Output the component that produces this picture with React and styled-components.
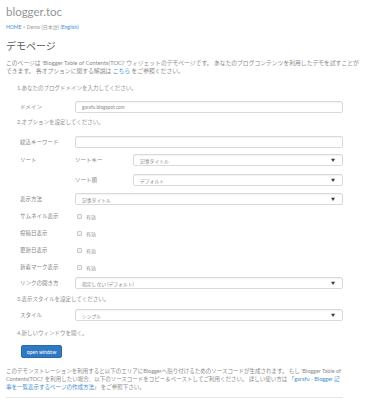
import React from "react";
import styled, { createGlobalStyle } from "styled-components";

const GlobalStyle = createGlobalStyle`
  html, body {
    margin: 0;
    padding: 0;
    background: #fff;
  }
  body {
    font-family: Lato, "Noto Sans CJK JP", sans-serif;
    color: #666;
  }
`;

const Page = styled.div`
  width: 387px;
  height: 400px;
  overflow: hidden;
  box-sizing: border-box;
  padding: 4px 0 0 6px;
`;

const SiteTitle = styled.div`
  font-size: 11.5px;
  line-height: 16px;
  font-weight: 400;
  color: #959595;
`;

const Crumbs = styled.div`
  margin-top: 3px;
  font-size: 5px;
  line-height: 8px;
  color: #999;
`;

const Link = styled.a`
  color: #3d8fd1;
  text-decoration: none;
`;

const Heading = styled.h1`
  margin: 8px 0 0;
  font-size: 10px;
  line-height: 14px;
  font-weight: 400;
  color: #5a5a5a;
`;

const Para = styled.p`
  margin: ${(p) => p.$top || 0}px 0 0;
  width: 376px;
  font-size: ${(p) => p.$size || 5.7}px;
  line-height: ${(p) => p.$lh || 7.5}px;
  color: #8a8a8a;
`;

const Step = styled.div`
  margin: ${(p) => p.$top}px 0 0 11px;
  font-size: 5.5px;
  line-height: 8px;
  color: #909090;
`;

const Row = styled.div`
  display: flex;
  align-items: ${(p) => (p.$top_align ? "flex-start" : "center")};
  margin: ${(p) => p.$top}px 0 0 14px;
  width: 323px;
  min-height: 12px;
`;

const Label = styled.div`
  flex: none;
  width: ${(p) => p.$width || 55}px;
  font-size: 5.5px;
  line-height: 12px;
  color: #858585;
`;

const Field = styled.div`
  flex: 1;
  box-sizing: border-box;
  height: 12px;
  display: flex;
  align-items: center;
  justify-content: space-between;
  padding: 0 7px 0 6px;
  border: 1px solid #dadada;
  border-radius: 2px;
  background: #fff;
  box-shadow: inset 0 1px 1px rgba(0, 0, 0, 0.05);
  font-size: 4.8px;
  color: #888;
`;

const Arrow = styled.span`
  font-size: 4px;
  color: #333;
`;

const Group = styled.div`
  flex: 1;
  display: flex;
  flex-direction: column;
  gap: 8px;
`;

const SubRow = styled.div`
  display: flex;
  align-items: center;
`;

const Check = styled.label`
  display: flex;
  align-items: center;
  gap: 4px;
  padding-left: 2px;
  font-size: 5px;
  color: #909090;
`;

const Box = styled.span`
  width: 3px;
  height: 3px;
  border: 1px solid #c8c8c8;
  border-radius: 1px;
  background: #f4f4f4;
`;

const Button = styled.button`
  margin: 8px 0 0 15px;
  width: 41px;
  height: 13px;
  padding: 0;
  border: 1px solid #2a6aa6;
  border-radius: 2px;
  background: #3079c2;
  color: #fff;
  font-family: Lato, sans-serif;
  font-size: 5px;
  display: block;
`;

const Rule = styled.hr`
  margin: 6px 0 0;
  width: 337px;
  border: none;
  border-top: 1px solid #e6e6e6;
`;

const Select = ({ value }) => (
  <Field>
    <span>{value}</span>
    <Arrow>▼</Arrow>
  </Field>
);

const CheckRow = ({ label }) => (
  <Row $top={5}>
    <Label>{label}</Label>
    <Check>
      <Box />
      有効
    </Check>
  </Row>
);

export default function App() {
  return (
    <Page>
      <GlobalStyle />
      <SiteTitle>blogger.toc</SiteTitle>
      <Crumbs>
        <Link href="#">HOME</Link> &gt; Demo (日本語) <Link href="#">(English)</Link>
      </Crumbs>
      <Heading>デモページ</Heading>
      <Para $top={6} $size={5.8}>
        このページは 'Blogger Table of Contents(TOC)' ウィジェットのデモページです。 あなたのブログコンテンツを利用したデモを試すことが
        <br />
        できます。 各オプションに関する解説は <Link href="#">こちら</Link> をご参照ください。
      </Para>

      <Step $top={10}>1.あなたのブログドメインを入力してください。</Step>
      <Row $top={9}>
        <Label>ドメイン</Label>
        <Field>garafu.blogspot.com</Field>
      </Row>

      <Step $top={5}>2.オプションを設定してください。</Step>
      <Row $top={10}>
        <Label>絞込キーワード</Label>
        <Field />
      </Row>
      <Row $top={6} $top_align>
        <Label>ソート</Label>
        <Group>
          <SubRow>
            <Label $width={58}>ソートキー</Label>
            <Select value="記事タイトル" />
          </SubRow>
          <SubRow>
            <Label $width={58}>ソート順</Label>
            <Select value="デフォルト" />
          </SubRow>
        </Group>
      </Row>
      <Row $top={7}>
        <Label>表示方法</Label>
        <Select value="記事タイトル" />
      </Row>
      <CheckRow label="サムネイル表示" />
      <CheckRow label="投稿日表示" />
      <CheckRow label="更新日表示" />
      <CheckRow label="新着マーク表示" />
      <Row $top={4}>
        <Label>リンクの開き方</Label>
        <Select value="指定しない (デフォルト)" />
      </Row>

      <Step $top={6}>3.表示スタイルを設定してください。</Step>
      <Row $top={6}>
        <Label>スタイル</Label>
        <Select value="シンプル" />
      </Row>

      <Step $top={8}>4.新しいウィンドウを開く。</Step>
      <Button>open window</Button>

      <Para $top={9} $size={5.5} $lh={8}>
        このデモンストレーションを利用すると以下のエリアにBloggerへ貼り付けるためのソースコードが生成されます。 もし 'Blogger Table of
        <br />
        Contents(TOC)' を利用したい場合、以下のソースコードをコピー＆ペーストしてご利用ください。 詳しい使い方は 「<Link href="#">garafu - Blogger 記
        <br />
        事を一覧表示するページの作成方法</Link>」 をご参照下さい。
      </Para>
      <Rule />
    </Page>
  );
}
